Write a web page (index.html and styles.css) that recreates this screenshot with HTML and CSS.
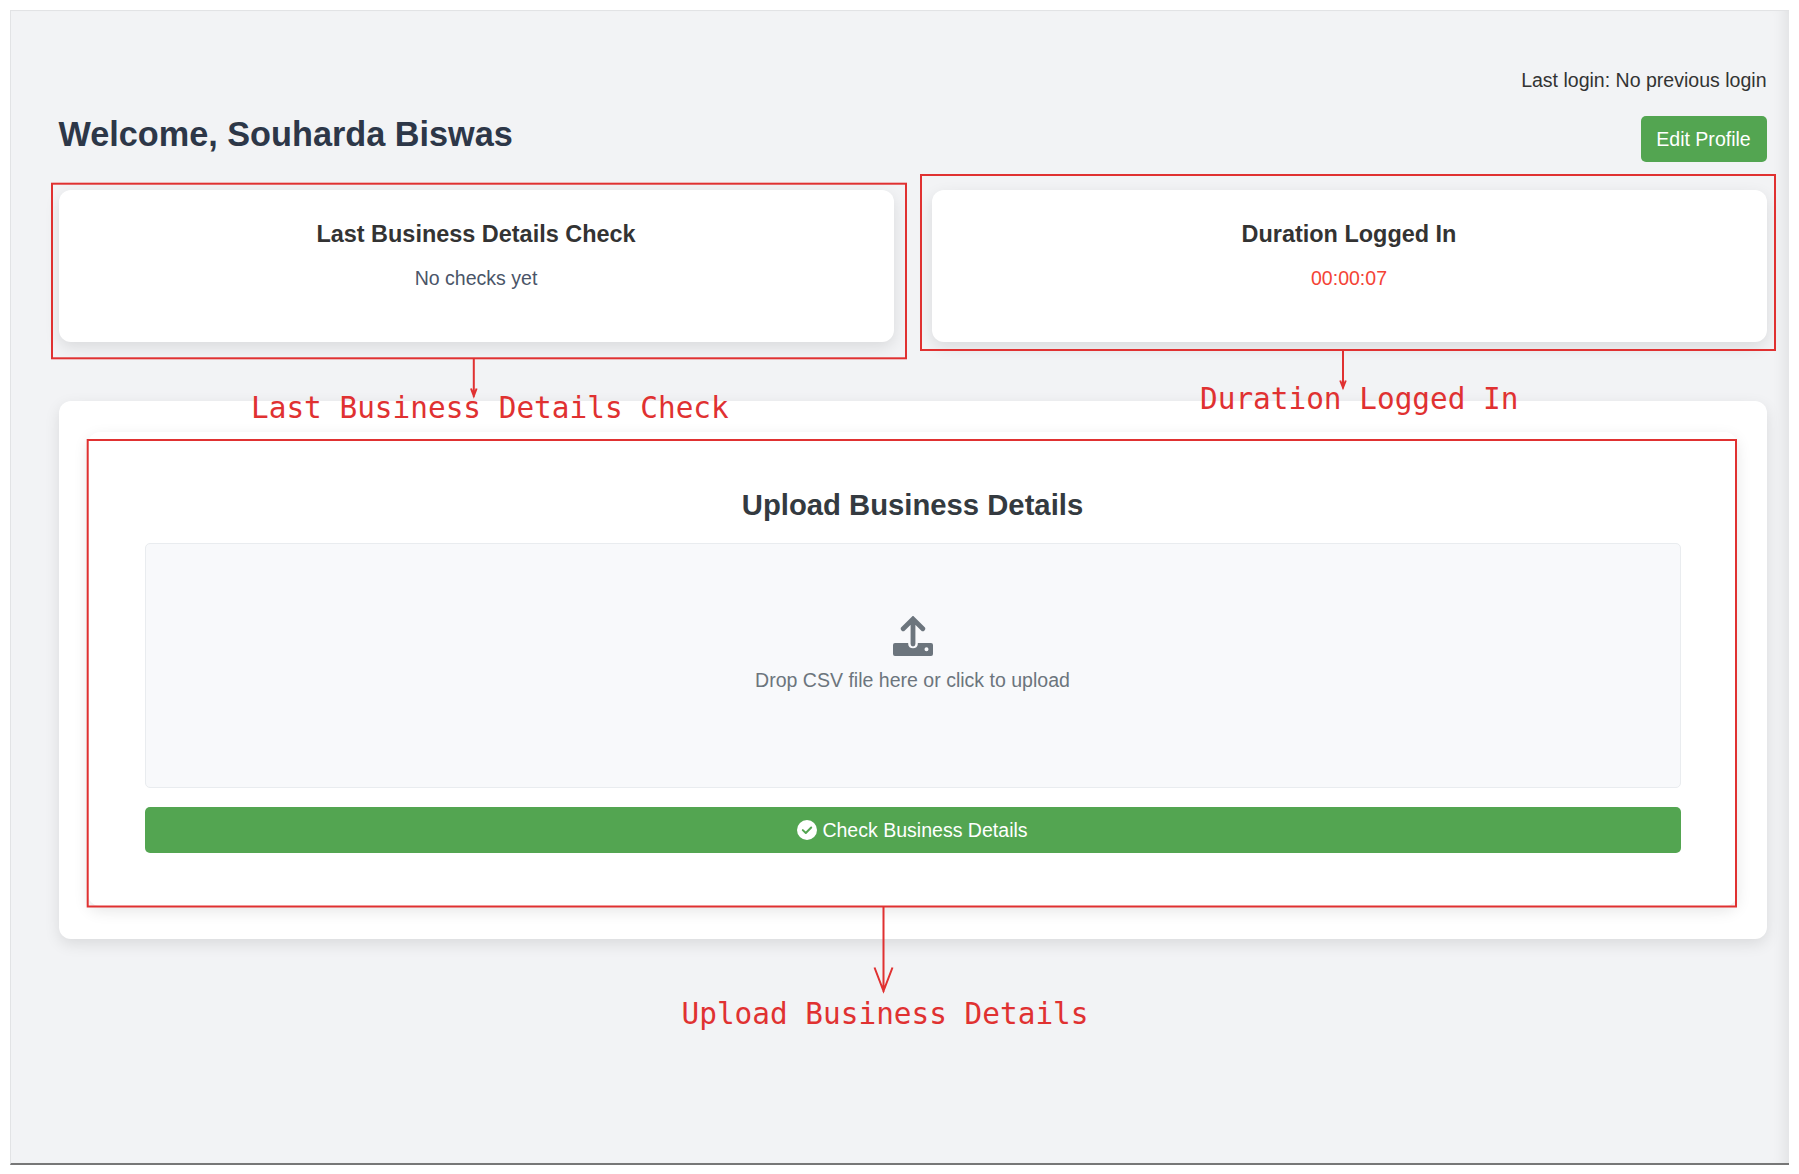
FILE: index.html
```html
<!DOCTYPE html>
<html lang="en">
<head>
<meta charset="utf-8">
<title>Dashboard</title>
<link rel="stylesheet" href="styles.css">
</head>
<body>
<main class="dashboard">
  <p class="last-login">Last login: No previous login</p>
  <header class="header">
    <h1 class="welcome">Welcome, Souharda Biswas</h1>
    <button class="btn edit-profile">Edit Profile</button>
  </header>
  <section class="stats">
    <article class="card stat">
      <h2 class="stat-title">Last Business Details Check</h2>
      <p class="stat-text">No checks yet</p>
    </article>
    <article class="card stat">
      <h2 class="stat-title">Duration Logged In</h2>
      <p class="stat-text timer">00:00:07</p>
    </article>
  </section>
  <section class="card outer">
    <div class="card upload">
      <h2 class="upload-title">Upload Business Details</h2>
      <div class="dropzone">
        <svg class="upload-icon" viewBox="0 0 40 40">
          <path class="tray" d="M2 27H15.2V28C15.2 30.800 17.300 32.300 20 32.300S24.800 30.800 24.800 28V27H38Q40 27 40 29V38Q40 40 38 40H2Q0 40 0 38V29Q0 27 2 27ZM33.500 31.200a2 2 0 1 0 0 4a2 2 0 1 0 0-4Z"/>
          <path class="arrow" d="M20 28V3.500M10.200 12.700L20 3L29.800 12.700"/>
        </svg>
        <p class="drop-text">Drop CSV file here or click to upload</p>
      </div>
      <button class="btn check">
        <svg class="check-icon" viewBox="0 0 20 20"><circle cx="10" cy="10" r="10"/><path d="M5.800 10.100L8.800 13L14.200 7.500"/></svg>
        <span>Check Business Details</span>
      </button>
    </div>
  </section>
</main>
<svg class="marks" viewBox="0 0 1799 1174">
  <rect x="52" y="183.700" width="854" height="174.600"/>
  <rect x="921" y="175" width="854" height="175"/>
  <rect x="87.700" y="440" width="1648.300" height="466.500"/>
  <path d="M473.800 358V397M471 388.500L473.800 396L476.600 388.500"/>
  <path d="M1343 350V388.500M1340.200 380.500L1343 387.500L1345.800 380.500"/>
  <path d="M883.500 907V992M874.500 967.500L883.500 991L892.500 967.500"/>
</svg>
<p class="note note-check">Last Business Details Check</p>
<p class="note note-duration">Duration Logged In</p>
<p class="note note-upload">Upload Business Details</p>
</body>
</html>
```

FILE: styles.css
```css
* { box-sizing: border-box; }
body {
  margin: 0;
  height: 1174px;
  padding: 10px 10px 9px;
  background: #fff;
  position: relative;
  overflow: hidden;
  font-family: "Liberation Sans", Arial, sans-serif;
}
h1, h2, p { margin: 0; }
.dashboard {
  height: 1155px;
  padding: 58px 22.5px 0 47.5px;
  background: #f2f3f5;
  border: 1px solid #e2e3e5;
  border-right: 0;
  border-bottom: 2px solid #777;
  box-shadow: inset -14px 0 14px -10px rgba(0, 0, 0, .08);
  color: #333;
}
.last-login { text-align: right; font-size: 19.55px; line-height: 22px; }
.header { display: flex; justify-content: space-between; margin-top: 25px; height: 46px; }
.welcome { font-size: 34.25px; line-height: 40px; margin-top: -2px; color: #2d3748; }
.btn {
  display: flex;
  align-items: center;
  justify-content: center;
  height: 46px;
  border: 0;
  border-radius: 5px;
  background: #53a551;
  color: #fff;
  font: 19.55px "Liberation Sans", Arial, sans-serif;
}
.edit-profile { width: 126px; padding: 0; }
.stats { display: grid; grid-template-columns: 1fr 1fr; gap: 38px; margin-top: 28px; }
.card {
  background: #fff;
  border-radius: 12px;
  box-shadow: 0 5px 15px rgba(0, 0, 0, .1);
}
.stat { height: 152px; padding-top: 30px; text-align: center; }
.stat-title { font-size: 23.45px; line-height: 28px; }
.stat-text { margin-top: 19px; font-size: 19.55px; line-height: 22px; color: #4a5568; }
.stat-text.timer { color: #f44336; }
.outer { margin-top: 59px; height: 538px; padding: 31px 29.5px 33px; }
.upload { height: 474px; padding: 56px 56.5px 0; }
.upload-title { text-align: center; font-size: 29.25px; line-height: 34px; color: #343a40; }
.dropzone {
  display: flex;
  flex-direction: column;
  align-items: center;
  height: 245px;
  margin-top: 21px;
  padding-top: 72px;
  background: #f8f9fb;
  border: 1px solid #e9ecef;
  border-radius: 5px;
}
.upload-icon { width: 40px; height: 40px; }
.tray { fill: #6c757d; fill-rule: evenodd; }
.arrow { fill: none; stroke: #6c757d; stroke-width: 4.8; stroke-linecap: round; }
.drop-text { margin-top: 13px; font-size: 19.55px; line-height: 22px; color: #6c757d; }
.check { width: 100%; margin-top: 19px; padding: 0; gap: 5px; }
.check-icon { width: 20px; height: 20px; fill: #fff; }
.check-icon path { fill: none; stroke: #53a551; stroke-width: 2; stroke-linecap: round; stroke-linejoin: round; }
.marks { position: absolute; left: 0; top: 0; width: 1799px; height: 1174px; fill: none; stroke: #e03131; stroke-width: 2; }
.note {
  position: absolute;
  white-space: nowrap;
  font: 29.4px/34px "Comic Shanns", "DejaVu Sans Mono", monospace;
  color: #e03131;
}
.note-check { left: 251px; top: 391px; }
.note-duration { left: 1200px; top: 382px; }
.note-upload { left: 681.5px; top: 997px; }
```
